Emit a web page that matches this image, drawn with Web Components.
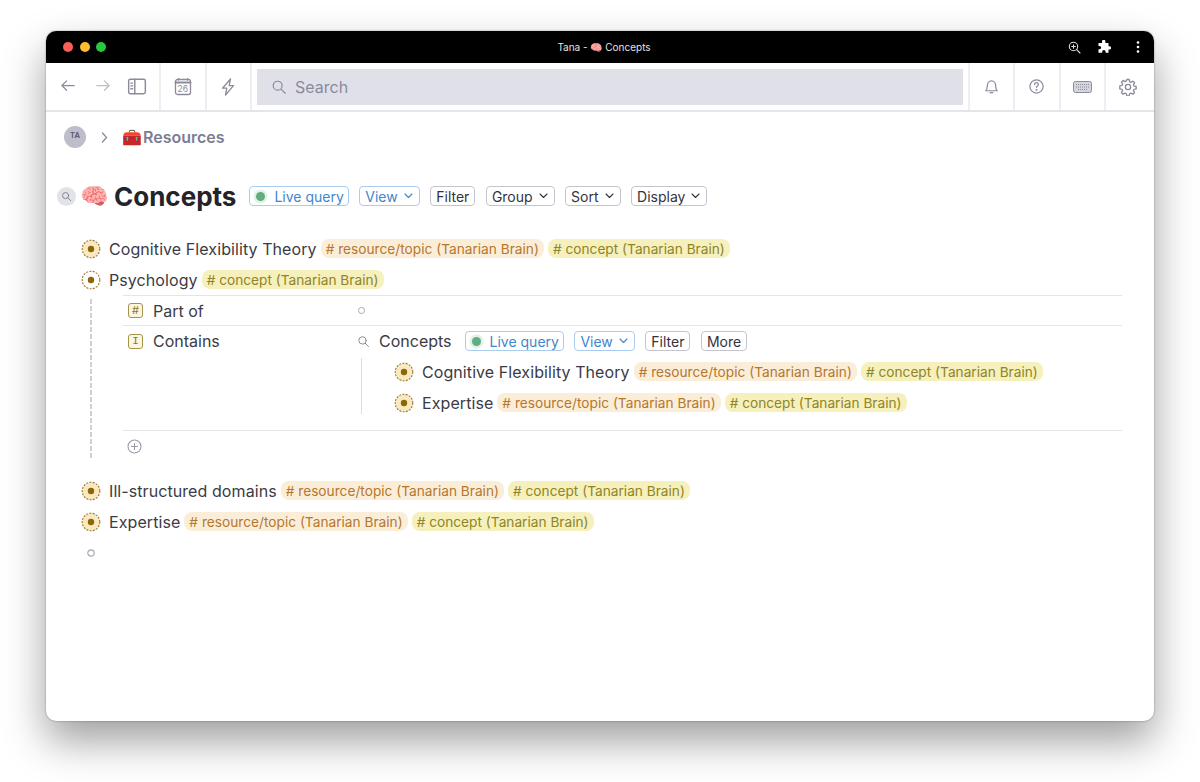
<!DOCTYPE html>
<html lang="en">
<head>
<meta charset="utf-8">
<title>Tana - Concepts</title>
<style>
    html, body { margin: 0; padding: 0; background: #fff; }
    body { font-family: Inter, "Liberation Sans", sans-serif; }
</style>
</head>
<body>
<tana-window>
    <title-bar slot="title"></title-bar>
    <tool-bar slot="tools"></tool-bar>
    <bread-crumb></bread-crumb>
    <page-heading></page-heading>
    <node-row state="full">Cognitive Flexibility Theory<tag-pill kind="resource"></tag-pill><tag-pill kind="concept"></tag-pill></node-row>
    <node-row state="open">Psychology<tag-pill kind="concept"></tag-pill></node-row>
    <node-fields></node-fields>
    <node-row state="full">Ill-structured domains<tag-pill kind="resource"></tag-pill><tag-pill kind="concept"></tag-pill></node-row>
    <node-row state="full">Expertise<tag-pill kind="resource"></tag-pill><tag-pill kind="concept"></tag-pill></node-row>
    <node-row state="empty"></node-row>
</tana-window>

<script>
const ICONS = {
    back: '<path d="M15 8H2M7 3 2 8l5 5"/>',
    panel: '<rect x="1.5" y="2" width="15" height="13" rx="1.5"/><path d="M7 2v13M3.5 5.5h1.5M3.5 8h1.5M3.5 10.5h1.5"/>',
    calendar: '<rect x="1.5" y="1.5" width="15" height="15" rx="2"/><path d="M1.5 4.5h15" stroke-width="2"/><path d="M4.5 .5v1.5M13.5 .5v1.5"/>',
    bolt: '<path d="M11.500 1 3.500 10.200h4.300L6.500 17l8-9.300h-4.300z"/>',
    bell: '<path d="M3 13.5c1-1 1.5-2 1.5-4.5C4.500 5.500 6.500 3 9 3s4.500 2.500 4.500 6c0 2.500.5 3.500 1.500 4.500z"/><path d="M7.500 15.500h3"/>',
    help: '<circle cx="9" cy="9" r="7"/><path d="M7 7c0-1.300 1-2 2-2s2 .7 2 1.900c0 1.600-2 1.700-2 3.200"/><circle cx="9" cy="12.800" r=".4"/>',
    gear: '<circle cx="9" cy="9" r="2.600"/><path d="M7.800 1.500h2.400l.4 2.100 1.500.7 1.800-1.200 1.700 1.700-1.200 1.800.7 1.500 2.100.4v2.400l-2.100.4-.7 1.500 1.200 1.800-1.700 1.700-1.800-1.200-1.500.7-.4 2.100H7.800l-.4-2.100-1.500-.7-1.800 1.200-1.700-1.700 1.200-1.800-.7-1.500-2.100-.4V7.800l2.100-.4.7-1.500-1.200-1.800 1.700-1.700 1.800 1.200 1.500-.7z"/>',
    search: '<circle cx="7.500" cy="7.500" r="5"/><path d="m11.300 11.300 4.700 4.700"/>'
};

function icon(name, size, extra) {
    return `<svg width="${size}" height="${size}" viewBox="0 0 18 18" fill="none" stroke="currentColor" stroke-width="1.300" stroke-linecap="round" stroke-linejoin="round" ${extra || ''}>${ICONS[name]}</svg>`;
}

class TanaWindow extends HTMLElement {
    constructor() {
        super();
        this.attachShadow({ mode: 'open' });
        this.shadowRoot.innerHTML = `
            <style>
                :host { display: block; padding: 31px 46px 61px; }
                .frame {
                    height: 690px;
                    border-radius: 10px;
                    overflow: hidden;
                    background: #fff;
                    display: flex;
                    flex-direction: column;
                    box-shadow: 0 20px 42px rgba(0, 0, 0, 0.38), 0 0 2px rgba(0, 0, 0, 0.4);
                }
                main { flex: 1; padding-top: 11px; }
            </style>
            <div class="frame">
                <slot name="title"></slot>
                <slot name="tools"></slot>
                <main><slot></slot></main>
            </div>`;
    }
}

class TitleBar extends HTMLElement {
    constructor() {
        super();
        this.attachShadow({ mode: 'open' });
        this.shadowRoot.innerHTML = `
            <style>
                :host { display: grid; grid-template-columns: 1fr auto 1fr; align-items: center; height: 32px; background: #000; color: #fff; padding: 0 9px 0 17px; }
                .dots { display: flex; gap: 6.500px; }
                .dots i { width: 10px; height: 10px; border-radius: 50%; }
                .name { font-size: 10px; color: #e4e4e4; }
                .right { display: flex; align-items: center; justify-content: flex-end; gap: 16px; }
                svg { display: block; }
            </style>
            <div class="dots"><i style="background:#fc5f57"></i><i style="background:#febc2e"></i><i style="background:#28c840"></i></div>
            <div class="name">Tana - 🧠 Concepts</div>
            <div class="right">
                <svg width="13" height="13" viewBox="0 0 13 13" fill="none" stroke="#ddd" stroke-width="1.100" stroke-linecap="round"><circle cx="5.500" cy="5.500" r="4.200"/><path d="m8.700 8.700 3.300 3.300M3.700 5.500h3.600M5.500 3.700v3.600"/></svg>
                <svg width="14" height="14" viewBox="0 0 14 14" fill="#fff" style="margin-right:2px"><path d="M5 1.500a1.700 1.700 0 0 1 3.400 0V3h3.100v3.200h1a1.700 1.700 0 0 1 0 3.400h-1v3.200H8.600v-1a1.700 1.700 0 0 0-3.400 0v1H1.500V9.300h1a1.700 1.700 0 0 0 0-3.400h-1V3H5z"/></svg>
                <svg width="14" height="14" viewBox="0 0 14 14" fill="#fff" style="margin-left:2px"><circle cx="7" cy="2.500" r="1.300"/><circle cx="7" cy="7" r="1.300"/><circle cx="7" cy="11.500" r="1.300"/></svg>
            </div>`;
    }
}

class ToolBar extends HTMLElement {
    constructor() {
        super();
        this.attachShadow({ mode: 'open' });
        this.shadowRoot.innerHTML = `
            <style>
                :host { display: flex; height: 47px; color: #8b8b9c; border-bottom: 2px solid #e4e4ea; }
                .group { display: flex; align-items: center; justify-content: center; border-right: 2px solid #eeeef2; box-sizing: border-box; }
                .nav { width: 115px; padding: 0 12px 0 14px; justify-content: space-between; }
                .cell { width: 45.500px; }
                .end { border-right: 0; border-left: 2px solid #eeeef2; }
                .last { width: 50px; padding-right: 4px; }
                .search-wrap { flex: 1; padding: 6px 5px 5px; display: flex; }
                .search {
                    flex: 1;
                    display: flex;
                    align-items: center;
                    gap: 8px;
                    padding-left: 14px;
                    background: #e0e0e8;
                    color: #8a8a9c;
                    font-size: 16px;
                }
                .cal { position: relative; }
                .cal b { position: absolute; left: 0; right: 0; top: 6.500px; font-size: 8.500px; font-weight: 400; text-align: center; }
                svg { display: block; }
                .fwd { opacity: .55; transform: scaleX(-1); }
            </style>
            <div class="group nav">
                ${icon('back', 17)}
                ${icon('back', 17, 'class="fwd"')}
                ${icon('panel', 20)}
            </div>
            <div class="group cell"><span class="cal">${icon('calendar', 18)}<b>26</b></span></div>
            <div class="group cell">${icon('bolt', 18)}</div>
            <div class="search-wrap"><div class="search">${icon('search', 16)}<span>Search</span></div></div>
            <div class="group cell end">${icon('bell', 17)}</div>
            <div class="group cell end">${icon('help', 17)}</div>
            <div class="group cell end">
                <svg width="19" height="12" viewBox="0 0 19 12" fill="#d5d5dc" stroke="currentColor"><rect x=".5" y=".5" width="18" height="11" rx="2"/><path d="M3 3.500h13M3 6h13M5 8.500h9" stroke-dasharray="1 1"/></svg>
            </div>
            <div class="group end last">${icon('gear', 18)}</div>`;
    }
}

class BreadCrumb extends HTMLElement {
    constructor() {
        super();
        this.attachShadow({ mode: 'open' });
        this.shadowRoot.innerHTML = `
            <style>
                :host { display: flex; align-items: center; height: 28px; padding-left: 18px; color: #7d7d92; font-size: 16px; font-weight: 600; }
                .avatar { width: 22px; height: 22px; border-radius: 50%; background: #bdbdcb; color: #55556a; font-size: 7.500px; text-align: center; line-height: 19px; flex: none; }
                svg { margin: 0 14px 0 15px; }
                .emoji { font-weight: 400; margin-right: 1px; }
            </style>
            <div class="avatar">TA</div>
            <svg width="7" height="11" viewBox="0 0 7 11" fill="none" stroke="#8b8b9c" stroke-width="1.300" stroke-linecap="round" stroke-linejoin="round"><path d="m1.500 1 4 4.500-4 4.500"/></svg>
            <span class="emoji">🧰</span><span>Resources</span>`;
    }
}

class QueryPill extends HTMLElement {
    constructor() {
        super();
        this.attachShadow({ mode: 'open' });
        const blue = this.hasAttribute('blue');
        const caret = this.hasAttribute('caret');
        const dot = this.hasAttribute('dot');
        this.shadowRoot.innerHTML = `
            <style>
                :host {
                    display: inline-flex;
                    align-items: center;
                    height: 20px;
                    box-sizing: border-box;
                    padding: 0 ${dot ? 4 : 5}px 0 5px;
                    border: 1px solid ${blue ? '#a9cdf0' : '#c4c4ce'};
                    border-radius: 4px;
                    color: ${blue ? '#3f86cc' : '#33333d'};
                    font-size: 14px;
                    font-weight: 400;
                    background: #fff;
                    flex: none;
                }
                .dot { width: 9px; height: 9px; border-radius: 50%; background: #5fae82; box-shadow: 0 0 0 2.500px #e3f1e8; margin: 0 9px 0 1px; }
                svg { margin-left: 6px; margin-right: 1px; }
            </style>
            ${dot ? '<span class="dot"></span>' : ''}<slot></slot>
            ${caret ? '<svg width="9" height="6" viewBox="0 0 9 6" fill="none" stroke="currentColor" stroke-width="1.100" stroke-linecap="round" stroke-linejoin="round"><path d="m1 1 3.500 3.500L8 1"/></svg>' : ''}`;
    }
}

class PageHeading extends HTMLElement {
    constructor() {
        super();
        this.attachShadow({ mode: 'open' });
        this.shadowRoot.innerHTML = `
            <style>
                :host { display: flex; align-items: center; height: 40px; margin: 25px 0 17px; padding-left: 11px; }
                .find { width: 19px; height: 19px; border-radius: 50%; background: #e2e2e9; color: #6f6f80; display: flex; align-items: center; justify-content: center; margin-right: 4px; }
                .brain { font-size: 23px; margin-right: 5px; line-height: 1; }
                h1 { margin: 0 13px 0 0; font-size: 26px; font-weight: 700; color: #23232b; }
                .pills { display: flex; gap: 10.500px; }
            </style>
            <span class="find">${icon('search', 11)}</span>
            <span class="brain">🧠</span>
            <h1>Concepts</h1>
            <div class="pills">
                <query-pill blue dot>Live query</query-pill>
                <query-pill blue caret>View</query-pill>
                <query-pill>Filter</query-pill>
                <query-pill caret>Group</query-pill>
                <query-pill caret>Sort</query-pill>
                <query-pill caret>Display</query-pill>
            </div>`;
    }
}

class TagPill extends HTMLElement {
    constructor() {
        super();
        this.attachShadow({ mode: 'open' });
        const resource = this.getAttribute('kind') === 'resource';
        this.shadowRoot.innerHTML = `
            <style>
                :host {
                    display: inline-flex;
                    align-items: center;
                    height: 19px;
                    padding: 0 5px;
                    margin-left: 4px;
                    border-radius: 8px;
                    font-size: 13.700px;
                    letter-spacing: 0;
                    white-space: nowrap;
                    background: ${resource ? '#fbeed9' : '#f6f0bd'};
                    color: ${resource ? '#b5772f' : '#8f8526'};
                }
            </style>
            # ${resource ? 'resource/topic' : 'concept'} (Tanarian Brain)`;
    }
}

class NodeRow extends HTMLElement {
    constructor() {
        super();
        this.attachShadow({ mode: 'open' });
        const state = this.getAttribute('state');
        let bullet = '';
        if (state === 'empty') {
            bullet = '<circle cx="10" cy="10" r="3.200" fill="#fff" stroke="#a8a8b4" stroke-width="1.200"/>';
        } else {
            bullet = `<circle cx="10" cy="10" r="8.800" fill="${state === 'full' ? '#f9e9c0' : '#fff'}" stroke="#9b7430" stroke-width="1.100" stroke-dasharray="2 1.300"/><circle cx="10" cy="10" r="3.200" fill="#8f6606"/>`;
        }
        this.shadowRoot.innerHTML = `
            <style>
                :host { display: flex; align-items: center; height: 31px; padding-left: var(--row-indent, 35px); font-size: 16px; letter-spacing: .08px; color: #3b3b45; white-space: nowrap; }
                svg { flex: none; margin-right: 8px; }
                .text { display: inline-flex; align-items: center; }
            </style>
            <svg width="20" height="20" viewBox="0 0 20 20">${bullet}</svg>
            <span class="text"><slot></slot></span>`;
    }
}

class NodeFields extends HTMLElement {
    constructor() {
        super();
        this.attachShadow({ mode: 'open' });
        this.shadowRoot.innerHTML = `
            <style>
                :host { display: block; position: relative; margin: 0 32px 14px 77px; font-size: 16px; color: #3b3b45; }
                .guide { position: absolute; left: -33px; top: 4px; bottom: 3px; width: 1.500px; background: repeating-linear-gradient(#cfcfd6 0 5px, transparent 5px 7px); }
                .field { display: grid; grid-template-columns: 231px 1fr; border-top: 1px solid #e4e4ea; }
                .label { display: flex; align-items: center; gap: 10px; height: 30px; padding-left: 5px; }
                .first .label, .first .value { height: 29px; }
                .badge { width: 13px; height: 13px; border: 1.200px solid #a4934a; border-radius: 3px; background: #faf6e2; color: #8a7a28; font-size: 11px; line-height: 13px; text-align: center; flex: none; }
                .mono { font-family: "Liberation Mono", monospace; }
                .value { display: flex; align-items: center; height: 30px; padding-left: 3px; }
                .ring { width: 7px; height: 7px; margin-left: 1px; box-sizing: border-box; border: 1px solid #a8a8b4; border-radius: 50%; }
                .query { display: flex; align-items: center; color: #3b3b45; }
                .query svg { color: #85858f; margin-right: 9px; display: block; }
                .query .title { margin-right: 13px; }
                .pills { display: flex; gap: 10.500px; }
                .children { position: relative; margin-left: 7px; margin-bottom: 12px; --row-indent: 33px; }
                .children::before { content: ""; position: absolute; left: 0; top: 2px; bottom: 4px; border-left: 1px solid #dcdce2; }
                .add { border-top: 1px solid #e4e4ea; height: 30px; display: flex; align-items: center; padding-left: 4px; }
                .add svg { display: block; color: #9a9aa6; }
            </style>
            <div class="guide"></div>
            <div class="field first">
                <div class="label"><span class="badge">#</span>Part of</div>
                <div class="value"><span class="ring"></span></div>
            </div>
            <div class="field">
                <div class="label"><span class="badge mono">I</span>Contains</div>
                <div>
                    <div class="value">
                        <div class="query">
                            ${icon('search', 13)}
                            <span class="title">Concepts</span>
                            <div class="pills">
                                <query-pill blue dot>Live query</query-pill>
                                <query-pill blue caret>View</query-pill>
                                <query-pill>Filter</query-pill>
                                <query-pill>More</query-pill>
                            </div>
                        </div>
                    </div>
                    <div class="children">
                        <node-row state="full">Cognitive Flexibility Theory<tag-pill kind="resource"></tag-pill><tag-pill kind="concept"></tag-pill></node-row>
                        <node-row state="full">Expertise<tag-pill kind="resource"></tag-pill><tag-pill kind="concept"></tag-pill></node-row>
                    </div>
                </div>
            </div>
            <div class="add">
                <svg width="15" height="15" viewBox="0 0 15 15" fill="none" stroke="currentColor" stroke-width="1.100" stroke-linecap="round"><circle cx="7.500" cy="7.500" r="6.500"/><path d="M7.500 4.500v6M4.500 7.500h6"/></svg>
            </div>`;
    }
}

customElements.define('query-pill', QueryPill);
customElements.define('tag-pill', TagPill);
customElements.define('node-row', NodeRow);
customElements.define('node-fields', NodeFields);
customElements.define('page-heading', PageHeading);
customElements.define('bread-crumb', BreadCrumb);
customElements.define('tool-bar', ToolBar);
customElements.define('title-bar', TitleBar);
customElements.define('tana-window', TanaWindow);
</script>
</body>
</html>
